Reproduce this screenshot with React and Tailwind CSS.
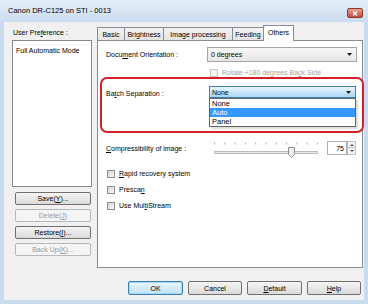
import React from 'react';

const Btn = ({ children, disabled, focus, className = '' }) => {
  let look = 'border-[#707070] bg-linear-to-b from-[#f4f4f4] to-[#dadada] text-black';
  if (disabled) look = 'border-[#b5b9bc] bg-[#f4f4f4] text-[#9a9a9a]';
  if (focus) look = 'border-[#3c7fb1] bg-linear-to-b from-[#eaf6fd] to-[#bfe3f7] text-black shadow-[inset_0_0_0_1px_#a8d8f5]';
  return (
    <div className={`flex items-center justify-center border rounded-[2px] text-[7px] leading-none ${look} ${className}`}>
      {children}
    </div>
  );
};

const Check = ({ children, disabled, className = '' }) => (
  <div className={`flex items-center h-[9px] ${className}`}>
    <div
      className={`w-[8px] h-[8px] border ${
        disabled ? 'border-[#c8c8c8] bg-[#f4f4f4]' : 'border-[#8e8f8f] bg-linear-to-br from-[#d6d6d6] to-[#f8f8f8]'
      }`}
    />
    <span className={`ml-[4px] text-[7px] leading-none ${disabled ? 'text-[#a3a3a3]' : 'text-black'}`}>{children}</span>
  </div>
);

const Arrow = () => (
  <svg width="5" height="3" viewBox="0 0 5 3" className="mr-[4px]">
    <path d="M0 0 L5 0 L2.5 3 Z" fill="#1a1a1a" />
  </svg>
);

const Tab = ({ children, w, active }) =>
  active ? (
    <div
      className={`${w} h-[16px] -ml-px -mb-px relative z-10 bg-white border border-b-0 border-[#898c95] flex items-start justify-center pt-[3px] text-[7px] leading-none text-black`}
    >
      {children}
    </div>
  ) : (
    <div
      className={`${w} h-[13px] -ml-px first:ml-0 bg-linear-to-b from-[#f3f3f3] to-[#e2e2e2] border border-b-0 border-[#898c95] flex items-center justify-center text-[7px] leading-none text-black`}
    >
      {children}
    </div>
  );

export default function App() {
  return (
    <div className="w-[368px] h-[304px] bg-[#c9dbef] flex flex-col font-['Liberation_Sans',Arial,sans-serif]">
      {/* Title bar */}
      <div className="h-[22px] flex pl-[8px] pr-[5px] bg-linear-to-b from-[#e4eef9] to-[#cbdcef]">
        <span className="flex-1 self-center text-[7.5px] leading-none text-black">Canon DR-C125 on STI - 0013</span>
        <div className="mt-[8px] w-[16px] h-[10px] rounded-[2px] border border-[#8f3a2c] bg-linear-to-b from-[#e8a293] to-[#c5493a] flex items-center justify-center">
          <svg width="6" height="5" viewBox="0 0 6 5">
            <path d="M1 0.5 L5 4.5 M5 0.5 L1 4.5" stroke="#fff" strokeWidth="1.3" />
          </svg>
        </div>
      </div>

      {/* Client area */}
      <div className="mx-[4px] h-[278px] bg-[#f0f0f0] flex flex-col">
        <div className="flex pt-[3px]">
          {/* Left column */}
          <div className="w-[93px] pl-[8px] flex flex-col">
            <div className="h-[15px] flex items-center pl-[1px] text-[7px] leading-none">
              User Pre<u>f</u>erence :
            </div>
            <div className="w-[80px] h-[147px] border border-[#828790] bg-white pl-[3px] pt-[6px] text-[7px] leading-none">
              Full Automatic Mode
            </div>
            <div className="ml-[3px] mt-[5px] w-[76px] flex flex-col gap-[4px]">
              <Btn className="h-[13px]">Save(<u>Y</u>)...</Btn>
              <Btn disabled className="h-[13px]">Delete(<u>J</u>)</Btn>
              <Btn className="h-[13px]">Restore(<u>I</u>)...</Btn>
              <Btn disabled className="h-[13px]">Back Up(<u>K</u>)...</Btn>
            </div>
          </div>

          {/* Tab control */}
          <div className="w-[266px] flex flex-col">
            <div className="h-[15px] flex items-end">
              <Tab w="w-[28px]">Basic</Tab>
              <Tab w="w-[40px]">Brightness</Tab>
              <Tab w="w-[70px]">Image processing</Tab>
              <Tab w="w-[32px]">Feeding</Tab>
              <Tab w="w-[31px]" active>Others</Tab>
            </div>
            <div className="relative h-[228px] border border-[#898c95] bg-white pl-[8px] pt-[6px] flex flex-col">
              {/* Document orientation */}
              <div className="flex items-center">
                <span className="w-[101px] text-[7px] leading-none">
                  Docu<u>m</u>ent Orientation :
                </span>
                <div className="w-[150px] h-[15px] border border-[#a5a5a5] bg-linear-to-b from-[#f7f7f7] to-[#e6e6e6] flex items-center pl-[3px] text-[7px] leading-none">
                  <span className="flex-1">0 degrees</span>
                  <Arrow />
                </div>
              </div>
              <Check disabled className="mt-[6px] ml-[104px]">
                Rotate +180 degrees Ba<u>c</u>k Side
              </Check>

              {/* Batch separation */}
              <div className="flex items-center mt-[9px]">
                <span className="w-[103px] pt-[3px] text-[7px] leading-none">
                  Ba<u>t</u>ch Separation :
                </span>
                <div className="relative w-[147px] h-[12px]">
                  <div className="h-full border border-[#3c7fb1] bg-linear-to-b from-[#e9f5fd] to-[#a9d6f3] flex items-center pl-[2px] text-[7px] leading-none">
                    <span className="flex-1">None</span>
                    <Arrow />
                  </div>
                  <div className="absolute left-0 top-[12px] w-[147px] h-[29px] border border-[#646464] bg-white flex flex-col text-[7.5px] leading-none shadow-[2px_2px_2px_rgba(0,0,0,0.15)]">
                    <div className="h-[9px] flex items-center pl-[2px]">None</div>
                    <div className="h-[9px] flex items-center pl-[2px] bg-[#3399ff] text-white">Auto</div>
                    <div className="h-[9px] flex items-center pl-[2px]">Panel</div>
                  </div>
                </div>
              </div>

              {/* Compressibility */}
              <div className="flex items-start mt-[43px] h-[17px]">
                <span className="w-[104px] h-[14px] flex items-center text-[7px] leading-none">
                  <u>C</u>ompressibility of image :
                </span>
                <svg width="112" height="17" viewBox="0 0 112 17">
                  {[0, 1, 2, 3, 4, 5, 6, 7, 8, 9, 10].map((i) => (
                    <rect key={i} x={4 + i * 10.3} y="1.5" width="1" height="2" fill="#b0b0b0" />
                  ))}
                  <rect x="4.5" y="10.5" width="103" height="2" fill="#e7eaea" stroke="#b6bcc1" />
                  <path d="M78.5 6.5 h6 v7 l-3 3 l-3 -3 z" fill="#eeeeee" stroke="#8a8f94" />
                </svg>
                <div className="ml-[5px] w-[20px] h-[14px] border border-[#abadb3] bg-white flex items-center justify-end pr-[2px] text-[7px] leading-none">
                  75
                </div>
                <div className="w-[9px] h-[14px] flex flex-col">
                  <div className="h-[7px] border border-[#c2c2c2] bg-[#f2f2f2] flex items-center justify-center">
                    <svg width="4" height="2" viewBox="0 0 4 2"><path d="M0 2 L2 0 L4 2 Z" fill="#555" /></svg>
                  </div>
                  <div className="h-[7px] border border-t-0 border-[#c2c2c2] bg-[#f2f2f2] flex items-center justify-center">
                    <svg width="4" height="2" viewBox="0 0 4 2"><path d="M0 0 L4 0 L2 2 Z" fill="#555" /></svg>
                  </div>
                </div>
              </div>

              {/* Checkboxes */}
              <div className="mt-[11px] ml-[1px] flex flex-col gap-[7px]">
                <Check>
                  <u>R</u>apid recovery system
                </Check>
                <Check>
                  Presca<u>n</u>
                </Check>
                <Check>
                  Use Mul<u>t</u>iStream
                </Check>
              </div>

              {/* Annotation */}
              <div className="absolute left-[2px] top-[36px] w-[264px] h-[56px] border-2 border-[#d42027] rounded-[7px] pointer-events-none" />
            </div>
          </div>
        </div>

        {/* Bottom buttons */}
        <div className="mt-[13px] flex justify-end gap-[5px] pr-[3px]">
          <Btn focus className="w-[55px] h-[14px]">OK</Btn>
          <Btn className="w-[54px] h-[14px]">Cancel</Btn>
          <Btn className="w-[55px] h-[14px]"><u>D</u>efault</Btn>
          <Btn className="w-[54px] h-[14px]"><u>H</u>elp</Btn>
        </div>
      </div>
    </div>
  );
}
